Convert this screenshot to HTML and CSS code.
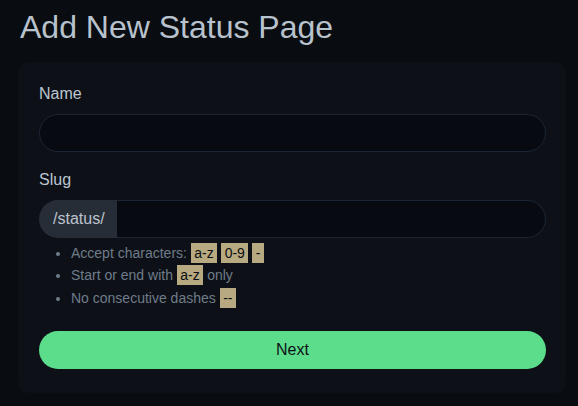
FILE: index.html
```html
<!DOCTYPE html>
<html lang="en">
<head>
<meta charset="utf-8">
<title>Add New Status Page</title>
<link rel="stylesheet" href="styles.css">
</head>
<body>
<div class="page">
  <h1 class="title">Add New Status Page</h1>
  <form class="card">
    <div class="field">
      <label class="label" for="name">Name</label>
      <input class="input" id="name" type="text">
    </div>
    <div class="field">
      <label class="label" for="slug">Slug</label>
      <div class="input-group">
        <span class="addon">/status/</span>
        <input class="input input-grouped" id="slug" type="text">
      </div>
      <ul class="help">
        <li>Accept characters: <code>a-z</code> <code>0-9</code> <code>-</code></li>
        <li>Start or end with <code>a-z</code> only</li>
        <li>No consecutive dashes <code>--</code></li>
      </ul>
    </div>
    <button class="btn" type="button">Next</button>
  </form>
</div>
</body>
</html>
```

FILE: styles.css
```css
html, body {
  margin: 0;
  padding: 0;
  background: #090c10;
}
body {
  font-family: "Liberation Sans", Arial, sans-serif;
  color: #bcc6d1;
}
.page {
  padding: 8px 12px 0 18px;
}
.title {
  margin: 0 0 16px 2px;
  font-size: 32px;
  font-weight: 400;
  line-height: 38px;
  color: #b8c2cd;
}
.card {
  width: 548px;
  box-sizing: border-box;
  background: #0d1117;
  border-radius: 10px;
  padding: 20px 20px 24px 21px;
  display: flex;
  flex-direction: column;
}
.field {
  display: flex;
  flex-direction: column;
  margin-bottom: 16px;
}
.label {
  font-size: 16px;
  line-height: 24px;
  margin-bottom: 8px;
  color: #bcc6d1;
}
.input {
  height: 38px;
  box-sizing: border-box;
  background: #070a10;
  border: 1px solid #1c2533;
  border-radius: 19px;
  color: #dee2e6;
  font-family: inherit;
  font-size: 16px;
  padding: 6px 16px;
  outline: none;
}
.input-group {
  display: flex;
  height: 38px;
}
.addon {
  display: flex;
  align-items: center;
  padding: 0 12px 0 14px;
  background: #262d37;
  border-radius: 19px 0 0 19px;
  color: #bcc4cd;
  font-size: 16px;
}
.input-grouped {
  flex: 1;
  border-radius: 0 19px 19px 0;
  border-left: none;
}
.help {
  margin: 5px 0 0 0;
  padding-left: 32px;
  font-size: 14px;
  line-height: 21px;
  color: #6f7c8a;
}
.help li::marker {
  color: #6f7c8a;
}
.help li + li {
  margin-top: 1px;
}
.help li:last-child {
  margin-top: 2px;
}
code {
  font-family: "Liberation Sans", Arial, sans-serif;
  font-size: 14px;
  background: #b8aa80;
  color: #0b0d10;
  padding: 2px 3.5px;
}
.btn {
  margin-top: 6px;
  height: 38px;
  border: none;
  border-radius: 19px;
  background: #5cdd8b;
  color: #0d1117;
  font-family: inherit;
  font-size: 16px;
  cursor: pointer;
}
```
